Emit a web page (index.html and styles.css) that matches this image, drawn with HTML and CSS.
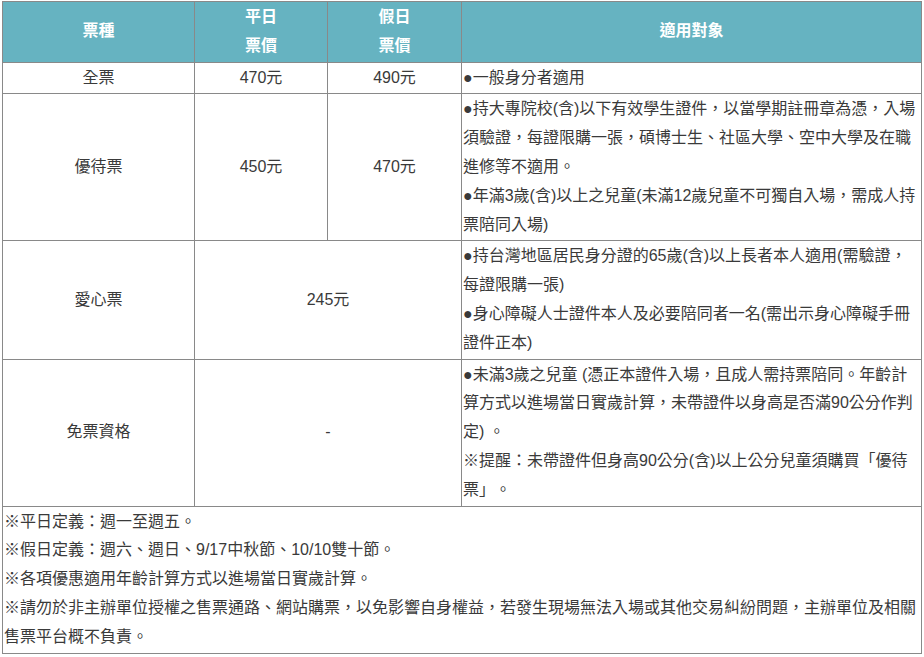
FILE: index.html
```html
<!DOCTYPE html>
<html lang="zh-Hant">
<head>
<meta charset="utf-8">
<title>票價</title>
<link rel="stylesheet" href="styles.css">
</head>
<body>
<div class="wrap">
<table class="price">
  <colgroup>
    <col class="c1">
    <col class="c2">
    <col class="c3">
    <col class="c4">
  </colgroup>
  <thead>
    <tr class="head">
      <th>票種</th>
      <th>平日<br>票價</th>
      <th>假日<br>票價</th>
      <th>適用對象</th>
    </tr>
  </thead>
  <tbody>
    <tr class="r1">
      <td class="ctr">全票</td>
      <td class="ctr">470元</td>
      <td class="ctr">490元</td>
      <td class="desc">●一般身分者適用</td>
    </tr>
    <tr class="r2">
      <td class="ctr">優待票</td>
      <td class="ctr">450元</td>
      <td class="ctr">470元</td>
      <td class="desc"><p>●持大專院校(含)以下有效學生證件，以當學期註冊章為憑，入場須驗證，每證限購一張，碩博士生、社區大學、空中大學及在職進修等不適用。</p><p>●年滿3歲(含)以上之兒童(未滿12歲兒童不可獨自入場，需成人持票陪同入場)</p></td>
    </tr>
    <tr class="r3">
      <td class="ctr">愛心票</td>
      <td class="ctr" colspan="2">245元</td>
      <td class="desc"><p>●持台灣地區居民身分證的65歲(含)以上長者本人適用(需驗證，每證限購一張)</p><p>●身心障礙人士證件本人及必要陪同者一名(需出示身心障礙手冊證件正本)</p></td>
    </tr>
    <tr class="r4">
      <td class="ctr">免票資格</td>
      <td class="ctr" colspan="2">-</td>
      <td class="desc"><p>●未滿3歲之兒童 (憑正本證件入場，且成人需持票陪同。年齡計算方式以進場當日實歲計算，未帶證件以身高是否滿90公分作判定) 。</p><p>※提醒：未帶證件但身高90公分(含)以上公分兒童須購買「優待票」。</p></td>
    </tr>
    <tr class="foot">
      <td class="desc" colspan="4"><p>※平日定義：週一至週五。</p><p>※假日定義：週六、週日、9/17中秋節、10/10雙十節。</p><p>※各項優惠適用年齡計算方式以進場當日實歲計算。</p><p>※請勿於非主辦單位授權之售票通路、網站購票，以免影響自身權益，若發生現場無法入場或其他交易糾紛問題，主辦單位及相關售票平台概不負責。</p></td>
    </tr>
  </tbody>
</table>
</div>
</body>
</html>
```

FILE: styles.css
```css
html, body {
  margin: 0;
  padding: 0;
  background: #ffffff;
}

.wrap {
  padding: 1px 0 0 2px;
}

.price {
  border-collapse: collapse;
  table-layout: fixed;
  width: 919px;
  font-family: "Liberation Sans", "Noto Sans CJK TC", sans-serif;
  font-size: 16px;
  line-height: 28.8px;
  color: #3a3a3a;
  text-spacing-trim: space-all;
}

.c1 { width: 192px; }
.c2 { width: 133px; }
.c3 { width: 134px; }
.c4 { width: 460px; }

.price th,
.price td {
  border: 1px solid #898989;
  padding: 1px;
  vertical-align: middle;
}

.head th {
  background: #66b3c1;
  color: #ffffff;
  font-weight: bold;
  text-align: center;
}

.ctr {
  text-align: center;
}

.desc {
  text-align: left;
}

.desc p {
  margin: 0;
}
```
